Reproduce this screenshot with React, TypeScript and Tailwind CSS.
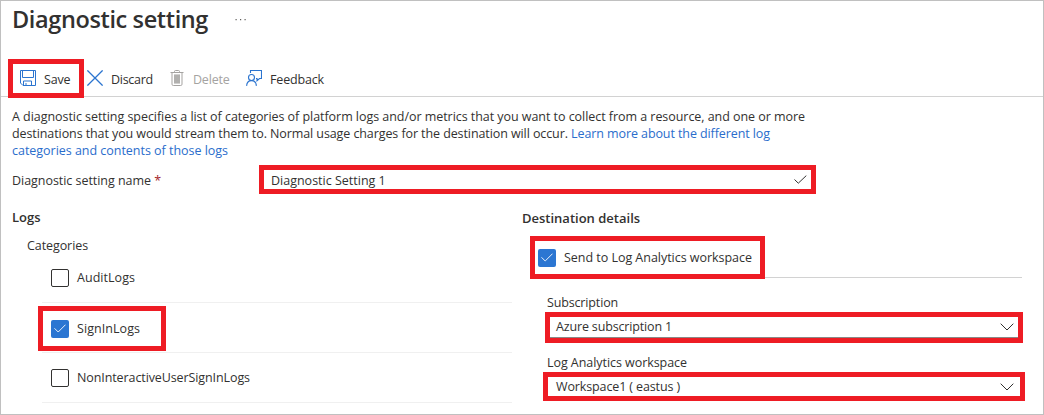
import React from "react";

function SaveIcon() {
  return (
    <svg className="size-4 shrink-0" viewBox="0 0 16 16" fill="none" stroke="#2b74cf">
      <path d="M.5.5h15v15H3L.5 13z" />
      <path d="M2.500.5v7h11v-7" />
      <path d="M3.500 15.500v-4.500h8v4.500M6 13v2.500" />
    </svg>
  );
}

function DiscardIcon() {
  return (
    <svg className="size-4 shrink-0" viewBox="0 0 16 16" fill="none" stroke="#2b74cf" strokeWidth="1.3">
      <path d="M.4.4l15.2 15.2M15.6.4L.4 15.6" />
    </svg>
  );
}

function TrashIcon() {
  return (
    <svg className="h-4 w-3.5 shrink-0" viewBox="0 0 14 16" fill="none" stroke="#a5a3a1">
      <path d="M.5 2.5h13M4.5 2.5v-1q0-1 1-1h3q1 0 1 1v1M2 3v11.2q0 1.3 1.3 1.3h7.4q1.3 0 1.3-1.3V3" />
      <path d="M4 4.500h6v9H4z" fill="#b9b7b5" stroke="none" />
      <path d="M5 4.500v9M7 4.500v9M9 4.500v9" strokeWidth=".7" />
    </svg>
  );
}

function FeedbackIcon() {
  return (
    <svg className="size-4 shrink-0" viewBox="0 0 16 16" fill="none" stroke="#2b74cf" strokeWidth="1.1">
      <path d="M4.5 3V.5h11v8h-2L11 10.7V8.5h-1" />
      <circle cx="5.5" cy="7.500" r="3" />
      <path d="M.6 15.9c.2-3.300 2.200-5.300 4.900-5.300s4.700 2 4.900 5.300" />
    </svg>
  );
}

function Chevron() {
  return (
    <svg className="h-[8px] w-[14px] shrink-0" viewBox="0 0 14 8" fill="none" stroke="#323130">
      <path d="M.7.7L7 7l6.300-6.300" />
    </svg>
  );
}

function Checkbox({ checked }: { checked?: boolean }) {
  return checked ? (
    <span className="flex size-[18px] shrink-0 items-center justify-center rounded-[2px] bg-[#2b76d2]">
      <svg className="h-[9px] w-3" viewBox="0 0 12 9" fill="none" stroke="#fff" strokeWidth=".9">
        <path d="M.5 4.300L4.200 8 11.500.7" />
      </svg>
    </span>
  ) : (
    <span className="size-[18px] shrink-0 rounded-[2px] border border-[#323130]" />
  );
}

export default function App() {
  return (
    <div className="flex h-[415px] w-[1044px] flex-col overflow-hidden border border-[#c0c0c0] bg-white font-['Open_Sans','Noto_Sans',sans-serif] text-[12.5px] leading-[17px] whitespace-nowrap text-[#323130]">
      <header className="flex h-[58px] pl-[11px]">
        <h1 className="mt-0.5 w-[223px] text-[23.5px] leading-[32px] font-semibold tracking-[-0.38px]">Diagnostic setting</h1>
        <svg className="mt-[17px] h-[3px] w-[12px]" viewBox="0 0 12 3" fill="#605e5c">
          <path d="M.5 1h1.200v1.200H.5zM5 1h1.200v1.200H5zM9.500 1h1.200v1.200H9.500z" />
        </svg>
      </header>

      <div className="flex h-[38px] shrink-0 items-start border-b border-[#d2d2d2] pl-[7px]">
        <div className="flex h-[39px] w-[76px] shrink-0 items-center gap-2 border-5 border-[#ee1c24] bg-white pb-px pl-[7px]">
          <SaveIcon />
          <span className="pt-[3px] tracking-[-0.14px]">Save</span>
        </div>
        <div className="flex h-[38px] items-center pl-[3px]">
          <DiscardIcon />
          <span className="ml-2 w-[59px] pt-[3px] tracking-[-0.27px]">Discard</span>
          <TrashIcon />
          <span className="ml-[9px] w-[53px] pt-[3px] tracking-[-0.2px] text-[#a5a3a1]">Delete</span>
          <FeedbackIcon />
          <span className="ml-2 pt-[3px] tracking-[-0.16px]">Feedback</span>
        </div>
      </div>

      <p className="mt-[11px] pl-[11px]">
        <span className="block tracking-[-0.048px]">
          A diagnostic setting specifies a list of categories of platform logs and/or metrics that you want to collect from a resource, and one or more
        </span>
        <span className="block tracking-[-0.091px]">
          destinations that you would stream them to. Normal usage charges for the destination will occur.{" "}
          <a className="text-[#2a6dcc]">Learn more about the different log</a>
        </span>
        <a className="block tracking-[-0.025px] text-[#2a6dcc]">categories and contents of those logs</a>
      </p>

      <div className="mt-[6px] flex h-[29px] shrink-0 items-center pl-[11px]">
        <label className="w-[247px] pt-0.5 tracking-[-0.041px]">
          Diagnostic setting name <span className="text-[#a4262c]">*</span>
        </label>
        <div className="flex h-[29px] w-[557px] items-center justify-between border-5 border-[#ee1c24] pr-[4px] pl-[7px]">
          <span className="pt-0.5">Diagnostic Setting 1</span>
          <svg className="h-[9px] w-[13px]" viewBox="0 0 13 9" fill="none" stroke="#323130">
            <path d="M.5 4.500L4.300 8.200 12.300.6" />
          </svg>
        </div>
      </div>

      <div className="flex">
        <section className="w-[521px] shrink-0 pl-[11px]">
          <h2 className="mt-[15px] text-[13px] font-semibold">Logs</h2>
          <h3 className="mt-[11px] ml-[15px] tracking-[-0.08px]">Categories</h3>
          <ul className="ml-[30px] w-[470px]">
            <li className="flex h-[49px] items-center gap-2 border-b border-[#f0f0f0] pl-[9px]">
              <Checkbox />
              <span className="pb-px tracking-[0.04px]">AuditLogs</span>
            </li>
            <li className="h-[50px] border-b border-[#f0f0f0] pt-[3px]">
              <div className="-ml-1 flex h-[45px] w-[128px] items-center gap-2 border-5 border-[#ee1c24] pl-2">
                <Checkbox checked />
                <span className="pb-px tracking-[0.06px]">SignInLogs</span>
              </div>
            </li>
            <li className="flex h-[50px] items-center gap-2 border-b border-[#f0f0f0] pl-[9px]">
              <Checkbox />
              <span className="tracking-[-0.1px]">NonInteractiveUserSignInLogs</span>
            </li>
          </ul>
        </section>

        <section className="w-[503px] shrink-0">
          <h2 className="mt-[16px] text-[13px] font-semibold">Destination details</h2>
          <div className="ml-[8px] flex h-[51px] items-end pt-[9px]">
            <div className="flex h-[43px] w-[235px] shrink-0 items-center gap-2 self-start border-5 border-[#ee1c24] pl-[3px]">
              <Checkbox checked />
              <span className="tracking-[-0.03px]">Send to Log Analytics workspace</span>
            </div>
            <div className="h-px w-[257px] bg-[#d2d2d2]" />
          </div>
          <label className="mt-[16px] ml-[25px] block tracking-[-0.15px]">Subscription</label>
          <div className="mt-px ml-[23px] h-[31px] w-[478px] border-5 border-[#ee1c24]">
            <div className="flex h-[21px] items-center justify-between border-b border-[#8a8886] pr-[4px] pl-[6px]">
              <span className="pb-0.5 tracking-[-0.156px]">Azure subscription 1</span>
              <Chevron />
            </div>
          </div>
          <label className="mt-[11px] ml-[25px] block tracking-[-0.055px]">Log Analytics workspace</label>
          <div className="mt-px ml-[21px] flex h-[29px] w-[482px] items-center justify-between border-5 border-[#ee1c24] pr-[6px] pl-[8px]">
            <span className="tracking-[-0.12px]">Workspace1 ( eastus )</span>
            <Chevron />
          </div>
        </section>
      </div>
    </div>
  );
}
